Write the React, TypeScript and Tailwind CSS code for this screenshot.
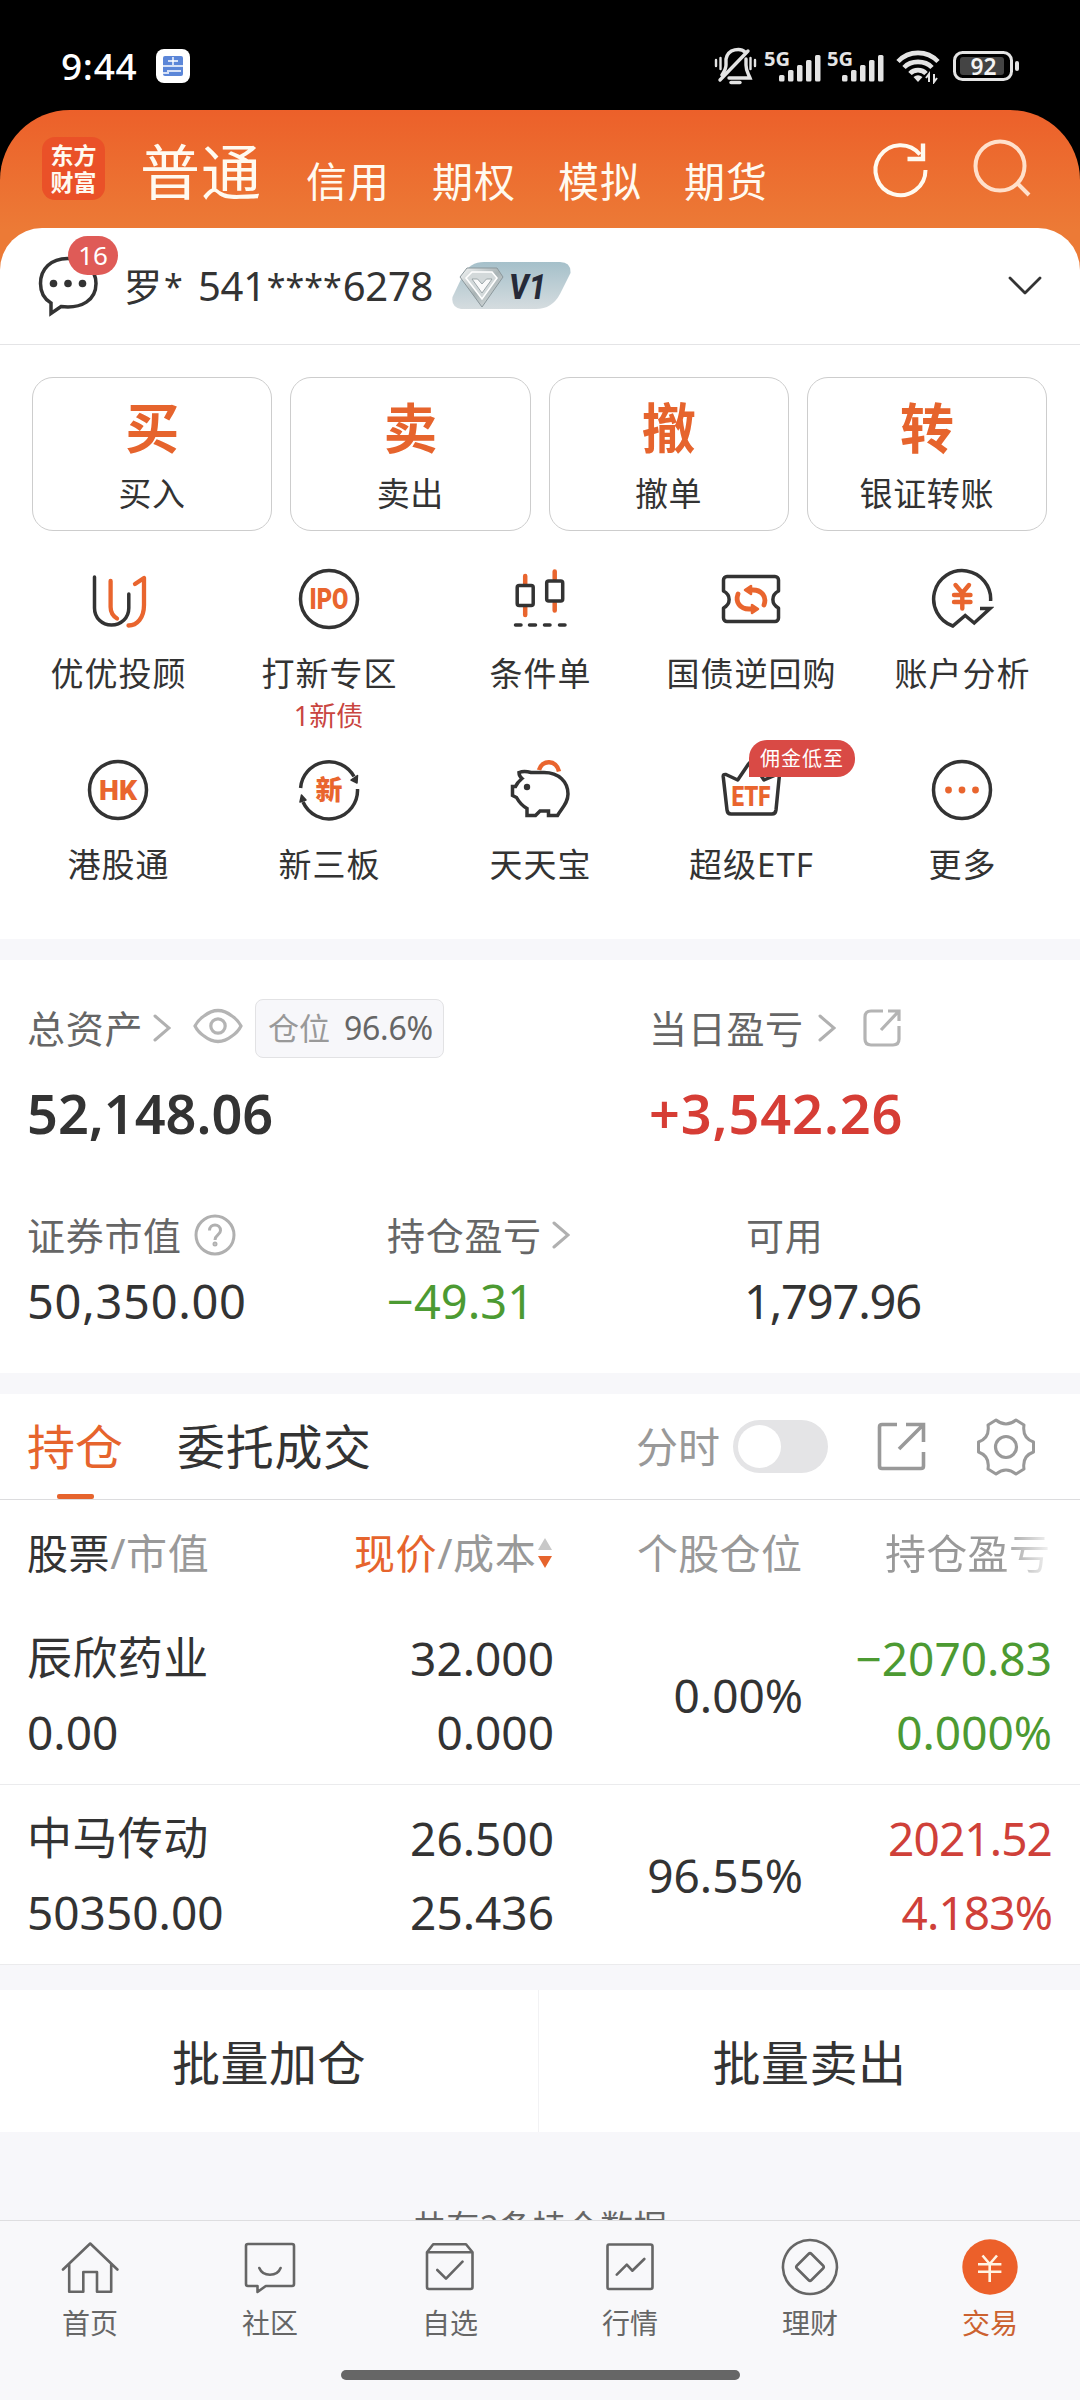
import type { ReactNode } from "react";

const stroke = {
  fill: "none",
  stroke: "#333333",
  strokeWidth: 3.5,
  strokeLinecap: "round",
  strokeLinejoin: "round",
} as const;

const orange = "#e9652e";

function Signal() {
  return (
    <svg width="58" height="34" viewBox="0 0 58 34" fill="#e4e4e4">
      <text x="0" y="17" fontSize="19" fontWeight="700" textLength="26" lengthAdjust="spacingAndGlyphs">5G</text>
      <rect x="15" y="26" width="5.5" height="6.5" rx="1.5" />
      <rect x="24" y="21" width="5.5" height="11.5" rx="1.5" />
      <rect x="33" y="16" width="5.5" height="16.5" rx="1.5" />
      <rect x="42" y="11" width="5.5" height="21.5" rx="1.5" />
      <rect x="51" y="6" width="5.5" height="26.5" rx="1.5" />
    </svg>
  );
}

function StatusBar() {
  return (
    <div className="flex h-[110px] items-center bg-black pt-[22px] pr-[60px] pl-[61px] text-white">
      <span className="w-[80px] text-[37px] leading-[40px] font-medium tracking-[0.7px]">9:44</span>
      <svg className="ml-[15px]" width="34" height="34" viewBox="0 0 34 34">
        <rect width="34" height="34" rx="8" fill="#ffffff" />
        <rect x="7" y="7" width="20" height="20" rx="2" fill="#5b86d8" />
        <path d="M7 17 H27 M12 12 H22 M17 8 V16 M11 22 H25 M7 24 H13" stroke="#ffffff" strokeWidth="1.4" />
      </svg>
      <div className="ml-auto flex items-center">
        <svg width="43" height="38" viewBox="0 0 43 38" fill="none" stroke="#e4e4e4" strokeWidth="3.4" strokeLinecap="round">
          <path d="M31 5 C27 1 14 1 12 12 V18 C12 22 10 25 8 28" />
          <path d="M34 4 L6 33" />
          <path d="M32 12 V18 C32 24 34 26 36 31 H15" />
          <path d="M17 35.5 H26" />
          <path d="M2 13 V19 M6.5 11 V22 M36.5 11 V22 M41 13 V19" strokeWidth="2.4" />
        </svg>
        <div className="ml-[7px]"><Signal /></div>
        <div className="ml-[5px]"><Signal /></div>
        <svg className="ml-[11px]" width="44" height="36" viewBox="0 0 44 36" fill="none" stroke="#e4e4e4" strokeWidth="4.6">
          <path d="M2 13.5 C13 2 31 2 42 13.5" />
          <path d="M8 19.5 C15 12 29 12 36 19.5" />
          <path d="M14 25.5 C18 21 26 21 30 25.5" />
          <path d="M22 34 L17.5 29 Q22 25.5 26.5 29 Z" fill="#e4e4e4" stroke="none" />
          <path d="M33 34 V26 L30 30 M38 26 V34 L41 30" strokeWidth="2" />
        </svg>
        <svg className="ml-[13px]" width="67" height="32" viewBox="0 0 67 32">
          <rect x="1.5" y="2.5" width="57" height="27" rx="8" fill="none" stroke="#e4e4e4" strokeWidth="3" />
          <rect x="7" y="7" width="44" height="18" rx="3" fill="#444444" />
          <rect x="62" y="11" width="4" height="10" rx="2" fill="#e4e4e4" />
          <text x="17.5" y="24.5" fontSize="22.5" fontWeight="600" fill="#f4f4f4" textLength="26" lengthAdjust="spacingAndGlyphs">92</text>
        </svg>
      </div>
    </div>
  );
}

function Header() {
  const tabs = ["信用", "期权", "模拟", "期货"];
  return (
    <div className="flex h-[118px] pl-[42px] text-[#fffaf0]">
      <div className="mt-[27px] flex h-[63px] w-[63px] flex-col items-center justify-center rounded-[13px] bg-[#ea5128] text-[23px] leading-[27px] font-bold">
        <span>东方</span>
        <span>财富</span>
      </div>
      <div className="mt-[26px] ml-[35px] w-[130px] text-[60px] leading-[72px] tracking-[1px] whitespace-nowrap">普通</div>
      <div className="mt-[46px] ml-[36px] flex gap-[42px]">
        {tabs.map((t) => (
          <span key={t} className="w-[84px] text-[41px] leading-[50px] tracking-[1px] whitespace-nowrap">{t}</span>
        ))}
      </div>
      <svg className="mt-[28px] ml-[101px]" width="64" height="64" viewBox="0 0 64 64" fill="none" stroke="#fffaf0" strokeWidth="4">
        <path d="M56.5 32 A25 25 0 1 1 51 16.5" />
        <path d="M54 5.5 V21 H38.5" strokeWidth="4.4" />
      </svg>
      <svg className="mt-[28px] ml-[36px]" width="64" height="64" viewBox="0 0 64 64" fill="none" stroke="#ffe0cb" strokeWidth="4">
        <circle cx="31" cy="28" r="24.5" />
        <path d="M48 45 L60 57" />
      </svg>
    </div>
  );
}

function Account() {
  return (
    <div className="flex h-[117px] items-center rounded-t-[42px] border-b border-[#e4e4e6] bg-white pl-[36px]">
      <div className="relative h-[64px] w-[88px]">
        <svg width="64" height="64" viewBox="0 0 64 64">
          <path {...stroke} d="M31.5 4.5 C15 4.5 4.5 15 4.5 29.5 C4.5 39 9 45.5 15 49 V59.5 L25 52.5 C46 55 60 46 60 29.5 C60 15 48 4.5 31.5 4.5 Z" strokeLinejoin="miter" />
          <circle cx="17.5" cy="29.5" r="3.8" fill="#333333" />
          <circle cx="32" cy="29.5" r="3.8" fill="#333333" />
          <circle cx="46.5" cy="29.5" r="3.8" fill="#333333" />
        </svg>
        <span className="absolute top-[-18px] left-[32px] h-[39px] w-[50px] rounded-full bg-[#df5b57] text-center text-[26px] leading-[39px] text-white">16</span>
      </div>
      <div className="flex h-[50px] w-[328px] items-center text-[40px] leading-[50px] whitespace-nowrap text-[#333]">
        <span className="text-[38px]">罗</span>
        <span className="ml-[2px] w-[20px] text-[34px]">*</span>
        <span className="ml-[14px] tracking-[-0.3px]">541</span>
        <span className="ml-[1px] w-[76px] text-[34px]">****</span>
        <span className="tracking-[-0.3px]">6278</span>
      </div>
      <svg width="119" height="48" viewBox="0 0 119 48">
        <defs>
          <linearGradient id="badge" x1="0" y1="0" x2="0" y2="1">
            <stop offset="0" stopColor="#a5c0ca" />
            <stop offset="1" stopColor="#d5dcdf" />
          </linearGradient>
          <linearGradient id="gem" x1="0" y1="0" x2="1" y2="1">
            <stop offset="0" stopColor="#f4f6f6" />
            <stop offset="0.5" stopColor="#a9b3b5" />
            <stop offset="1" stopColor="#e8ecec" />
          </linearGradient>
        </defs>
        <path d="M32 0 H108 Q119 0 118.5 11 L108 32 Q100 47 84 47 H9 Q-1 45 0.5 35 L11 13 Q18 0 32 0 Z" fill="url(#badge)" />
        <path d="M15 6 H45 L51 15 L30 45 L8 15 Z" fill="url(#gem)" stroke="#8b979b" strokeWidth="1" />
        <path d="M20 10 H40 L45 16 L30 37 L14 16 Z" fill="#d3d9da" stroke="#ffffff" strokeWidth="1.6" />
        <path d="M20 17 L30 31 L40 17 L34.5 17 L30 22 L25.5 17 Z" fill="#fafafa" stroke="#8b979b" strokeWidth="0.8" />
        <text x="57" y="37" fontSize="35" fontWeight="800" fontStyle="italic" fill="#262a38" textLength="37" lengthAdjust="spacingAndGlyphs" fontFamily="Roboto">V1</text>
      </svg>
      <svg className="mr-[38px] ml-auto" width="34" height="20" viewBox="0 0 34 20">
        <path {...stroke} strokeWidth="2.8" d="M2 2 L17 17 L32 2" />
      </svg>
    </div>
  );
}

const actions = [
  ["买", "买入"],
  ["卖", "卖出"],
  ["撤", "撤单"],
  ["转", "银证转账"],
];

type Service = { label: string; icon: ReactNode; note?: string; badge?: string };

const services: Service[] = [
  {
    label: "优优投顾",
    icon: (
      <g {...stroke}>
        <path d="M8.5 10 V41 C8.5 51 16 58 25.5 58 S42.8 51 42.8 41 V27" />
        <path stroke={orange} strokeWidth="4.3" d="M24.6 14 V40 C24.6 46 27 49 31 51.5" />
        <path stroke={orange} strokeWidth="4.3" d="M49 17 L58 11 V38 C58 51 51 58.5 42.5 58.5" />
      </g>
    ),
  },
  {
    label: "打新专区",
    note: "1新债",
    icon: (
      <g>
        <circle {...stroke} cx="32" cy="32" r="28.5" />
        <text x="12.5" y="42" fontSize="29" fontWeight="900" fontFamily="Roboto" fill={orange} textLength="39" lengthAdjust="spacingAndGlyphs">IPO</text>
      </g>
    ),
  },
  {
    label: "条件单",
    icon: (
      <g {...stroke}>
        <path stroke={orange} strokeWidth="4.5" d="M17.2 9 V17 M17.2 40 V48 M46.7 4.5 V12 M46.7 36 V43.5" />
        <rect x="9.2" y="18.5" width="16" height="20" rx="2" />
        <rect x="38.7" y="14" width="16" height="20" rx="2" />
        <path d="M7.5 58 H13 M21.5 58 H27.5 M36.5 58 H42 M51.5 58 H57" />
      </g>
    ),
  },
  {
    label: "国债逆回购",
    icon: (
      <g {...stroke}>
        <path d="M8 9.5 H56 a3.5 3.5 0 0 1 3.5 3.5 V24 C52 28 52 37 59.5 41 V51 a3.5 3.5 0 0 1 -3.5 3.5 H8 a3.5 3.5 0 0 1 -3.5 -3.5 V41 C12 37 12 28 4.5 24 V13 a3.5 3.5 0 0 1 3.5 -3.5 Z" />
        <g stroke={orange} strokeWidth="4.8">
          <path d="M31 23 H34 C43 23 48 30 45 38" />
          <path d="M26 23 L32 19 V27 Z" fill={orange} strokeWidth="2.5" />
          <path d="M33 42 H30 C21 42 16 35 19 27" />
          <path d="M39 42 L33 38 V46 Z" fill={orange} strokeWidth="2.5" />
        </g>
      </g>
    ),
  },
  {
    label: "账户分析",
    icon: (
      <g {...stroke}>
        <path strokeLinecap="butt" strokeLinejoin="miter" d="M60.6 34 A28.5 28.5 0 1 0 22.8 59 L35.2 48.5 L44.2 56 L60 41.5 H50" />
        <path stroke={orange} strokeWidth="4.4" d="M25.5 18 L32.3 26 L39 18 M24 28 H40.5 M24 35 H40.5 M32.3 27 V41.5" />
      </g>
    ),
  },
  {
    label: "港股通",
    icon: (
      <g>
        <circle {...stroke} cx="32" cy="32" r="28.5" />
        <text x="13" y="42" fontSize="28" fontWeight="900" fontFamily="Roboto" fill={orange} textLength="38" lengthAdjust="spacingAndGlyphs">HK</text>
      </g>
    ),
  },
  {
    label: "新三板",
    icon: (
      <g {...stroke}>
        <path strokeLinecap="butt" d="M3.6 30 A28.5 28.5 0 0 1 57 18.5 M60.5 31 A28.5 28.5 0 0 1 6 44" />
        <path fill="#333333" strokeWidth="1.5" d="M54 22 L60.5 17.5 L60 25 Z M3 44 L4.5 37 L9 42 Z" />
        <text x="18.5" y="42" fontSize="27" fontWeight="900" fill={orange} stroke="none">新</text>
      </g>
    ),
  },
  {
    label: "天天宝",
    icon: (
      <g {...stroke} strokeLinejoin="miter">
        <path stroke={orange} strokeWidth="4.5" strokeLinecap="butt" d="M31 12 C34 1.5 48.5 1.5 51 13.5" />
        <path d="M11 14.5 Q16 12.5 23 14.5 H36 C51 14.5 60 24 60 36 C60 45 54 50 49.5 57.5 H40.5 V53 H32 L27.5 57.5 H19 V50.5 C13 47 11 44 8.5 39.5 L4.5 37.5 V28.5 H7.5 C9 25 11 23 14 20.5 Q11 18 11 14.5 Z" fill="#ffffff" />
        <circle cx="19" cy="29" r="3.2" fill="#333333" stroke="none" />
      </g>
    ),
  },
  {
    label: "超级ETF",
    badge: "佣金低至",
    icon: (
      <g>
        <path {...stroke} d="M7 16.5 L18.7 22 L29.5 6 Q32 2.5 34.5 6 L45 22 L58 16.5 Q60.5 16 60.3 18.5 L57 52 Q56.5 56 53 56 H12 Q8.5 56 8 52 L4.2 18.5 Q4 16 7 16.5 Z" />
        <text x="12.5" y="47.5" fontSize="28" fontWeight="900" fontFamily="Roboto" fill={orange} textLength="39" lengthAdjust="spacingAndGlyphs">ETF</text>
      </g>
    ),
  },
  {
    label: "更多",
    icon: (
      <g>
        <circle {...stroke} cx="32" cy="32" r="28.5" />
        <circle cx="18.5" cy="32" r="3.4" fill={orange} />
        <circle cx="32" cy="32" r="3.4" fill={orange} />
        <circle cx="45.5" cy="32" r="3.4" fill={orange} />
      </g>
    ),
  },
];

function Services() {
  return (
    <div className="h-[594px] bg-white pt-[32px]">
      <div className="grid grid-cols-4 gap-[18px] pr-[33px] pl-[32px]">
        {actions.map(([mark, label]) => (
          <div key={label} className="flex h-[154px] flex-col items-center rounded-[21px] border border-[#cdcdcd] text-[#333]">
            <span className="mt-[20px] text-[54px] leading-[60px] font-bold text-[#e6642d]">{mark}</span>
            <span className="mt-[16px] text-[33px] leading-[40px] tracking-[0.7px]">{label}</span>
          </div>
        ))}
      </div>
      <div className="mt-[36px] grid grid-cols-5 pr-[13px] pl-[12px]">
        {services.map((s) => (
          <div key={s.label} className="relative flex h-[191px] flex-col items-center text-[#333]">
            <svg width="64" height="64" viewBox="0 0 64 64">{s.icon}</svg>
            <span className="mt-[22px] ml-[2px] text-[33px] leading-[42px] tracking-[1px] whitespace-nowrap">{s.label}</span>
            {s.note && <span className="mt-[4px] text-[27px] leading-[34px] text-[#c9453f]">{s.note}</span>}
            {s.badge && (
              <span className="absolute top-[-18px] left-[104px] h-[37px] w-[106px] rounded-[18px] rounded-bl-none bg-[#d94a45] text-center text-[20px] leading-[37px] tracking-[1px] text-white">
                {s.badge}
              </span>
            )}
          </div>
        ))}
      </div>
    </div>
  );
}

function Arrow() {
  return (
    <svg width="18" height="28" viewBox="0 0 18 28">
      <path d="M2 2 L16 14 L2 26" fill="none" stroke="#b0b0b0" strokeWidth="3" strokeLinecap="round" />
    </svg>
  );
}

function Assets() {
  return (
    <div className="h-[413px] bg-white pt-[39px] pl-[27px] text-[38px] leading-[58px] text-[#666]">
      <div className="flex">
        <div className="flex h-[58px] w-[622px] items-center">
          <span className="tracking-[0.7px]">总资产</span>
          <span className="ml-[10px]"><Arrow /></span>
          <svg className="mb-[4px] ml-[22px]" width="50" height="36" viewBox="0 0 50 36" fill="none" stroke="#b4b4b4" strokeWidth="3.2">
            <path d="M2 18 Q5 12 11 8 Q25 -3 39 8 Q45 12 48 18 Q45 24 39 28 Q25 39 11 28 Q5 24 2 18 Z" />
            <circle cx="25" cy="18" r="7.2" />
          </svg>
          <div className="ml-[12px] flex h-[59px] w-[189px] items-center rounded-[8px] border border-[#e2e2e4] bg-[#f7f7fa] pl-[12px] text-[31px] whitespace-nowrap">
            <span className="text-[#999]">仓位</span>
            <span className="ml-[14px] text-[32px] tracking-[-0.3px]">96.6%</span>
          </div>
        </div>
        <div className="flex h-[58px] items-center">
          <span className="tracking-[0.7px]">当日盈亏</span>
          <span className="ml-[14px]"><Arrow /></span>
          <svg className="ml-[27px]" width="38" height="38" viewBox="0 0 38 38" fill="none" stroke="#b4b4b4" strokeWidth="3.2">
            <path d="M20 2 H8 Q2 2 2 8 V30 Q2 36 8 36 H30 Q36 36 36 30 V17" />
            <path d="M25 2 H36 V12 M35 3 L18 21" />
          </svg>
        </div>
      </div>
      <div className="mt-[21px] flex text-[54px] leading-[70px] font-semibold">
        <span className="w-[622px] text-[#333]">52,148.06</span>
        <span className="tracking-[0.9px] text-[#d63d35]">+3,542.26</span>
      </div>
      <div className="mt-[58px] flex">
        <div className="flex w-[360px] items-center tracking-[0.7px]">
          证券市值
          <svg className="ml-[12px]" width="42" height="42" viewBox="0 0 42 42" fill="none" stroke="#b0b0b0" strokeWidth="3">
            <circle cx="21" cy="21" r="19" />
            <path d="M15.5 16.5 C15.5 9 26.5 9 26.5 16.5 C26.5 21 21 21 21 26" strokeWidth="3" />
            <circle cx="21" cy="30" r="1" />
          </svg>
        </div>
        <div className="flex w-[359px] items-center tracking-[0.7px]">
          持仓盈亏
          <span className="ml-[10px]"><Arrow /></span>
        </div>
        <span className="tracking-[0.7px]">可用</span>
      </div>
      <div className="mt-[10px] flex text-[47px] leading-[54px] text-[#333]">
        <span className="w-[360px] tracking-[0.7px]">50,350.00</span>
        <span className="w-[357px] text-[#4c9a32]">−49.31</span>
        <span className="tracking-[-1.2px]">1,797.96</span>
      </div>
    </div>
  );
}

type Holding = {
  name: string;
  value: string;
  price: string;
  cost: string;
  share: string;
  profit: string;
  rate: string;
  color: string;
};

const holdings: Holding[] = [
  { name: "辰欣药业", value: "0.00", price: "32.000", cost: "0.000", share: "0.00%", profit: "−2070.83", rate: "0.000%", color: "text-[#4c9a32]" },
  { name: "中马传动", value: "50350.00", price: "26.500", cost: "25.436", share: "96.55%", profit: "2021.52", rate: "4.183%", color: "text-[#cf4039] tracking-[-0.9px]" },
];

function Holdings() {
  return (
    <div className="bg-white text-[#333]">
      <div className="flex h-[106px] items-center border-b border-[#dcdcde] pl-[27px] text-[48px] leading-[60px]">
        <div className="relative flex h-full items-center text-[#e6642d]">
          持仓
          <span className="absolute bottom-[0px] left-[30px] h-[5px] w-[37px] rounded-[2px] bg-[#e6642d]"></span>
        </div>
        <span className="ml-[54px] tracking-[0.7px]">委托成交</span>
        <span className="ml-auto text-[42px] text-[#999]">分时</span>
        <div className="ml-[13px] flex h-[53px] w-[95px] items-center rounded-full bg-[#e4e4e6] pl-[5px]">
          <div className="h-[43px] w-[43px] rounded-full bg-white"></div>
        </div>
        <svg className="ml-[49px]" width="49" height="49" viewBox="0 0 49 49" fill="none" stroke="#999999" strokeWidth="3.6">
          <path d="M20 2.5 H5 Q2.5 2.5 2.5 5 V44 Q2.5 46.5 5 46.5 H44 Q46.5 46.5 46.5 44 V30" />
          <path d="M29 2.5 H46.5 V20 M45 4 L22 27" />
        </svg>
        <svg className="mr-[42px] ml-[48px]" width="64" height="64" viewBox="0 0 64 64" fill="none" stroke="#999999" strokeWidth="3" strokeLinejoin="round">
          <path d="M22 5 Q32 13 42 5 L50 10 Q48 23 59.5 27 V37 Q48 41 50 54 L42 59 Q32 51 22 59 L14 54 Q16 41 4.5 37 V27 Q16 23 14 10 Z" />
          <circle cx="32" cy="32" r="10.5" strokeWidth="3.2" />
        </svg>
      </div>
      <div className="flex h-[105px] items-center pl-[27px] text-[41px] leading-[50px] whitespace-nowrap text-[#999]">
        <div className="w-[327px] tracking-[0.6px]"><span className="text-[#333]">股票</span>/市值</div>
        <div className="flex w-[283px] items-center">
          <span className="tracking-[0.6px]"><span className="text-[#e6642d]">现价</span>/成本</span>
          <svg className="ml-[1px]" width="16" height="32" viewBox="0 0 16 32">
            <path d="M8 1 L15 13 H1 Z" fill="#c8c8c8" />
            <path d="M8 31 L15 19 H1 Z" fill="#e6642d" />
          </svg>
        </div>
        <span className="w-[248px] tracking-[0.3px]">个股仓位</span>
        <span className="bg-linear-to-r from-[#999] from-70% to-[#f4f4f4] bg-clip-text tracking-[0.3px] text-transparent">持仓盈亏</span>
      </div>
      {holdings.map((h) => (
        <div key={h.name} className="flex h-[180px] items-center border-b border-[#ebebed] pr-[28px] pl-[27px] text-[46px] leading-[74px]">
          <div className="flex w-[240px] flex-col">
            <span className="text-[45px] tracking-[0.4px]">{h.name}</span>
            <span>{h.value}</span>
          </div>
          <div className="flex w-[287px] flex-col text-right">
            <span>{h.price}</span>
            <span>{h.cost}</span>
          </div>
          <div className="w-[249px] text-right">{h.share}</div>
          <div className={`flex flex-1 flex-col text-right ${h.color}`}>
            <span>{h.profit}</span>
            <span>{h.rate}</span>
          </div>
        </div>
      ))}
    </div>
  );
}

const navItems: { label: string; icon: ReactNode }[] = [
  { label: "首页", icon: <path d="M5 34.5 L32.2 8.5 L59.4 34.5 M11.2 29 V56.7 H25.3 V37 H39 V56.7 H53.2 V29" /> },
  { label: "社区", icon: <path d="M10 9 H54 Q56 9 56 11 V49 Q56 51 54 51 H27.8 L19.5 57 V51 H10 Q8 51 8 49 V11 Q8 9 10 9 Z M21.3 33 C25 42 39 42 42.6 33" /> },
  { label: "自选", icon: <path d="M9 17.3 L15.2 9.3 H48 L54.5 17.3 V52 Q54.5 54 52.5 54 H11 Q9 54 9 52 Z H54.5 M19.3 35 L28 43.7 L44.5 26.7" /> },
  { label: "行情", icon: <path d="M11 9.5 H52.5 Q54.5 9.5 54.5 11.5 V52 Q54.5 54 52.5 54 H11 Q9.5 54 9.5 52 V11.5 Q9.5 9.5 11 9.5 Z M18.8 39.7 L28.8 29.7 L34.3 35.7 L46.3 24" /> },
  { label: "理财", icon: <path d="M32 5 A27 27 0 1 1 31.9 5 Z M30.5 19 Q32 17.5 33.5 19 L45 30.5 Q46.5 32 45 33.5 L33.5 45 Q32 46.5 30.5 45 L19 33.5 Q17.5 32 19 30.5 Z" /> },
  {
    label: "交易",
    icon: (
      <g>
        <circle cx="32" cy="32" r="27.7" fill="#ec602a" stroke="none" />
        <path stroke="#fff4e4" strokeLinecap="butt" d="M24.5 20.5 L31.7 29 L39 20.5 M20 29.3 H43.4 M20 36.7 H43.4 M31.7 29 V47" />
      </g>
    ),
  },
];

function Nav() {
  return (
    <div className="h-[180px] border-t border-[#dedee0] bg-[#f8f8fa]">
      <div className="flex pt-[14px]">
        {navItems.map((n) => (
          <div key={n.label} className="flex flex-1 flex-col items-center">
            <svg width="64" height="64" viewBox="0 0 64 64" fill="none" stroke="#666666" strokeWidth="2.6" strokeLinecap="round" strokeLinejoin="round">
              {n.icon}
            </svg>
            <span className={n.label === "交易" ? "mt-[6px] text-[28px] leading-[36px] text-[#cc6230]" : "mt-[6px] text-[28px] leading-[36px] text-[#666]"}>
              {n.label}
            </span>
          </div>
        ))}
      </div>
      <div className="mx-auto mt-[29px] h-[10px] w-[399px] rounded-full bg-[#666]"></div>
    </div>
  );
}

export default function App() {
  return (
    <div className="h-[2400px] w-[1080px] overflow-hidden bg-[#f7f7fa] font-['Noto_Sans','Noto_Sans_CJK_SC',sans-serif]">
      <StatusBar />
      <div className="bg-linear-to-b from-black from-50% to-white to-50%">
        <div className="rounded-t-[70px] bg-linear-to-b from-[#ec602a] to-[#ec7a36] to-[120px]">
          <Header />
          <Account />
        </div>
      </div>
      <Services />
      <div className="h-[21px]"></div>
      <Assets />
      <div className="h-[21px]"></div>
      <Holdings />
      <div className="mt-[25px] flex h-[142px] bg-white text-center text-[48px] leading-[145px] tracking-[0.5px] text-[#333]">
        <div className="w-[539px] border-r border-[#f2f2f4]">批量加仓</div>
        <div className="flex-1">批量卖出</div>
      </div>
      <div className="h-[88px] overflow-hidden pt-[75px] text-center text-[33px] leading-[40px] tracking-[0.6px] text-[#666]">共有2条持仓数据</div>
      <Nav />
    </div>
  );
}
